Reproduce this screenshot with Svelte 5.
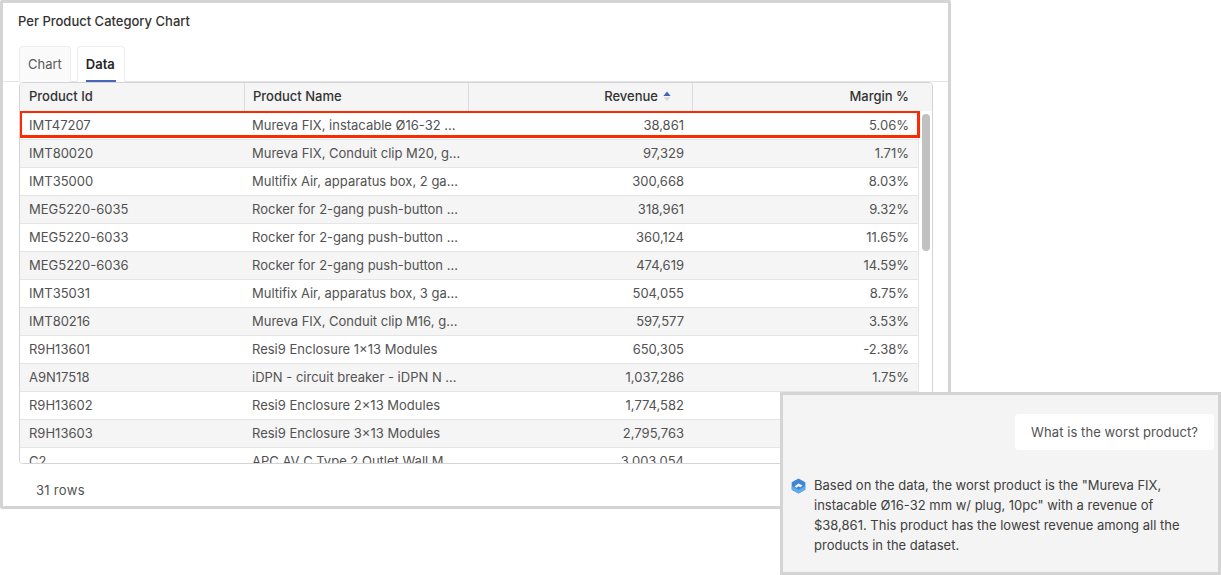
<script>
  const rows = [
    ['IMT47207', 'Mureva FIX, instacable Ø16-32 mm w/ plug, 10pc', '38,861', '5.06%'],
    ['IMT80020', 'Mureva FIX, Conduit clip M20, grey, 100pc', '97,329', '1.71%'],
    ['IMT35000', 'Multifix Air, apparatus box, 2 gang, grey', '300,668', '8.03%'],
    ['MEG5220-6035', 'Rocker for 2-gang push-button switch, white', '318,961', '9.32%'],
    ['MEG5220-6033', 'Rocker for 2-gang push-button switch, black', '360,124', '11.65%'],
    ['MEG5220-6036', 'Rocker for 2-gang push-button switch, grey', '474,619', '14.59%'],
    ['IMT35031', 'Multifix Air, apparatus box, 3 gang, grey', '504,055', '8.75%'],
    ['IMT80216', 'Mureva FIX, Conduit clip M16, grey, 100pc', '597,577', '3.53%'],
    ['R9H13601', 'Resi9 Enclosure 1×13 Modules', '650,305', '-2.38%'],
    ['A9N17518', 'iDPN - circuit breaker - iDPN N 1P+N 16A', '1,037,286', '1.75%'],
    ['R9H13602', 'Resi9 Enclosure 2×13 Modules', '1,774,582', '4.10%'],
    ['R9H13603', 'Resi9 Enclosure 3×13 Modules', '2,795,763', '6.20%'],
    ['C2', 'APC AV C Type 2 Outlet Wall Mount', '3,003,054', '7.40%']
  ];
</script>

<div class="page">
  <section class="panel">
    <h2 class="title">Per Product Category Chart</h2>
    <div class="tabs">
      <div class="tab">Chart</div>
      <div class="tab active">Data<span class="ink"></span></div>
    </div>
    <div class="grid">
      <div class="head">
        <div class="hc">Product Id</div>
        <div class="hc">Product Name</div>
        <div class="hc right">Revenue
          <svg class="sort" width="8" height="11" viewBox="0 0 8 11">
            <path d="M4 0.5 L7.6 5 H0.4 Z" fill="#3f67b8" />
            <path d="M0.8 6.2 H7.2 L4 10.2 Z" fill="#d3d6dc" />
          </svg>
        </div>
        <div class="hc right last">Margin %</div>
      </div>
      <div class="body">
        <div class="rows">
          {#each rows as r, i}
            <div class="row" class:alt={i % 2 === 1} class:hl={i === 0}>
              <div class="c">{r[0]}</div>
              <div class="c name"><span class="clip">{r[1]}</span></div>
              <div class="c right rev">{r[2]}</div>
              <div class="c right">{r[3]}</div>
            </div>
          {/each}
        </div>
        <div class="track"><div class="thumb"></div></div>
      </div>
    </div>
    <div class="foot">31 rows</div>
  </section>

  <aside class="chat">
    <div class="ask">What is the worst product?</div>
    <div class="reply">
      <svg class="logo" width="15" height="16" viewBox="0 0 15 16">
        <path d="M7.5 0.4 L14.3 4.2 V11.8 L7.5 15.6 L0.7 11.8 V4.2 Z" fill="#3f86d8" />
        <path d="M0.7 8 L7.5 11.8 L14.3 8 V11.8 L7.5 15.6 L0.7 11.8 Z" fill="#62aaec" />
        <path d="M3.4 8.6 L7.6 5.6 L11.6 7.4 L9.4 9.2 L7.5 8.3 L5.6 9.8 Z" fill="#f4f4f4" />
      </svg>
      <p>Based on the data, the worst product is the "Mureva FIX, instacable Ø16-32 mm w/ plug, 10pc" with a revenue of $38,861. This product has the lowest revenue among all the products in the dataset.</p>
    </div>
  </aside>
</div>

<style>
  :global(body) {
    margin: 0;
    background: #fff;
    font-family: Inter, "Liberation Sans", sans-serif;
    overflow: hidden;
  }
  .page {
    width: 1221px;
    height: 575px;
    overflow: hidden;
    position: relative;
    font-size: 13px;
    color: #525252;
  }
  .panel {
    width: 951px;
    height: 509px;
    box-sizing: border-box;
    border: 3px solid #d4d4d4;
    background: #fff;
    border-radius: 2px;
    display: flex;
    flex-direction: column;
  }
  .title {
    margin: 0;
    padding: 9px 0 0 15px;
    font-size: 13px;
    line-height: 18px;
    font-weight: 500;
    color: #333;
  }
  .tabs {
    display: flex;
    gap: 6px;
    margin-top: 16px;
    padding-left: 16px;
    height: 36px;
    box-sizing: border-box;
    border-bottom: 1px solid #e5e5e5;
  }
  .tab {
    position: relative;
    height: 36px;
    box-sizing: border-box;
    padding: 0 8px 2px;
    border: 1px solid #ededed;
    border-bottom: none;
    border-radius: 4px 4px 0 0;
    background: #fafafa;
    line-height: 34px;
    color: #595959;
  }
  .tab.active {
    background: #fff;
    color: #262626;
    font-weight: 600;
    min-width: 48px;
  }
  .ink {
    position: absolute;
    left: 8px;
    right: 8px;
    bottom: 0;
    height: 2px;
    background: #4567b7;
  }
  .grid {
    margin-left: 16px;
    width: 914px;
    height: 382px;
    box-sizing: border-box;
    border: 1px solid #d4d4d8;
    border-radius: 4px;
    overflow: hidden;
    display: flex;
    flex-direction: column;
    flex: none;
  }
  .head {
    display: grid;
    grid-template-columns: 225px 224px 224px 1fr;
    height: 28px;
    flex: none;
    background: #f5f5f5;
    color: #333;
    font-weight: 500;
    position: relative;
  }
  .hc {
    box-sizing: border-box;
    padding: 0 8px 2px;
    line-height: 26px;
    border-right: 1px solid #d9dce1;
    display: flex;
    gap: 5px;
    align-items: center;
  }
  .hc:first-child {
    padding-left: 9px;
  }
  .hc.right {
    justify-content: flex-end;
    padding-right: 21px;
  }
  .hc.last {
    border-right: none;
    padding-right: 23px;
  }
  .sort {
    flex: none;
  }
  .body {
    display: flex;
    flex: 1;
    min-height: 0;
    overflow: hidden;
  }
  .rows {
    width: 898px;
    flex: none;
  }
  .row {
    display: grid;
    grid-template-columns: 224px 224px 224px 1fr;
    height: 28px;
    box-sizing: border-box;
    border-top: 1px solid #e5e5e5;
    background: #fff;
    line-height: 27px;
    position: relative;
  }
  .row.alt {
    background: #f5f5f5;
  }
  .row.hl::after {
    content: "";
    position: absolute;
    left: -1px;
    right: -2px;
    top: -2px;
    bottom: 1px;
    border: 3px solid #fb2a00;
    pointer-events: none;
    z-index: 1;
  }
  .c {
    box-sizing: border-box;
    padding: 0 9px;
    white-space: nowrap;
    overflow: hidden;
  }
  .c.name {
    padding-left: 8px;
  }
  .clip {
    display: block;
    width: 209px;
    overflow: hidden;
    text-overflow: ellipsis;
  }
  .c.right {
    text-align: right;
  }
  .c.rev {
    padding-right: 8px;
  }
  .track {
    flex: none;
    width: 14px;
    background: #fff;
    border-left: 1px solid #e5e5e5;
    box-sizing: border-box;
    padding: 3px 2px 0 3px;
  }
  .thumb {
    width: 8px;
    height: 137px;
    background: #c1c1c1;
    border-radius: 4px;
  }
  .foot {
    padding: 17px 0 0 33px;
    line-height: 18px;
    color: #525252;
    letter-spacing: 0.3px;
  }
  .chat {
    position: absolute;
    left: 780px;
    top: 392px;
    width: 441px;
    height: 183px;
    box-sizing: border-box;
    border: 3px solid #d4d4d4;
    background: #f4f4f4;
    padding: 19px 4px 0 14px;
    display: flex;
    flex-direction: column;
  }
  .ask {
    align-self: flex-end;
    background: #fff;
    border-radius: 4px;
    padding: 0 16px;
    height: 36px;
    line-height: 37px;
    color: #525252;
    letter-spacing: 0.08px;
  }
  .reply {
    display: flex;
    gap: 8px;
    margin-top: 25px;
    align-items: flex-start;
  }
  .logo {
    flex: none;
    margin-top: 3px;
    margin-left: -6px;
  }
  .reply p {
    margin: 0;
    width: 380px;
    line-height: 20px;
    color: #404040;
  }
</style>
